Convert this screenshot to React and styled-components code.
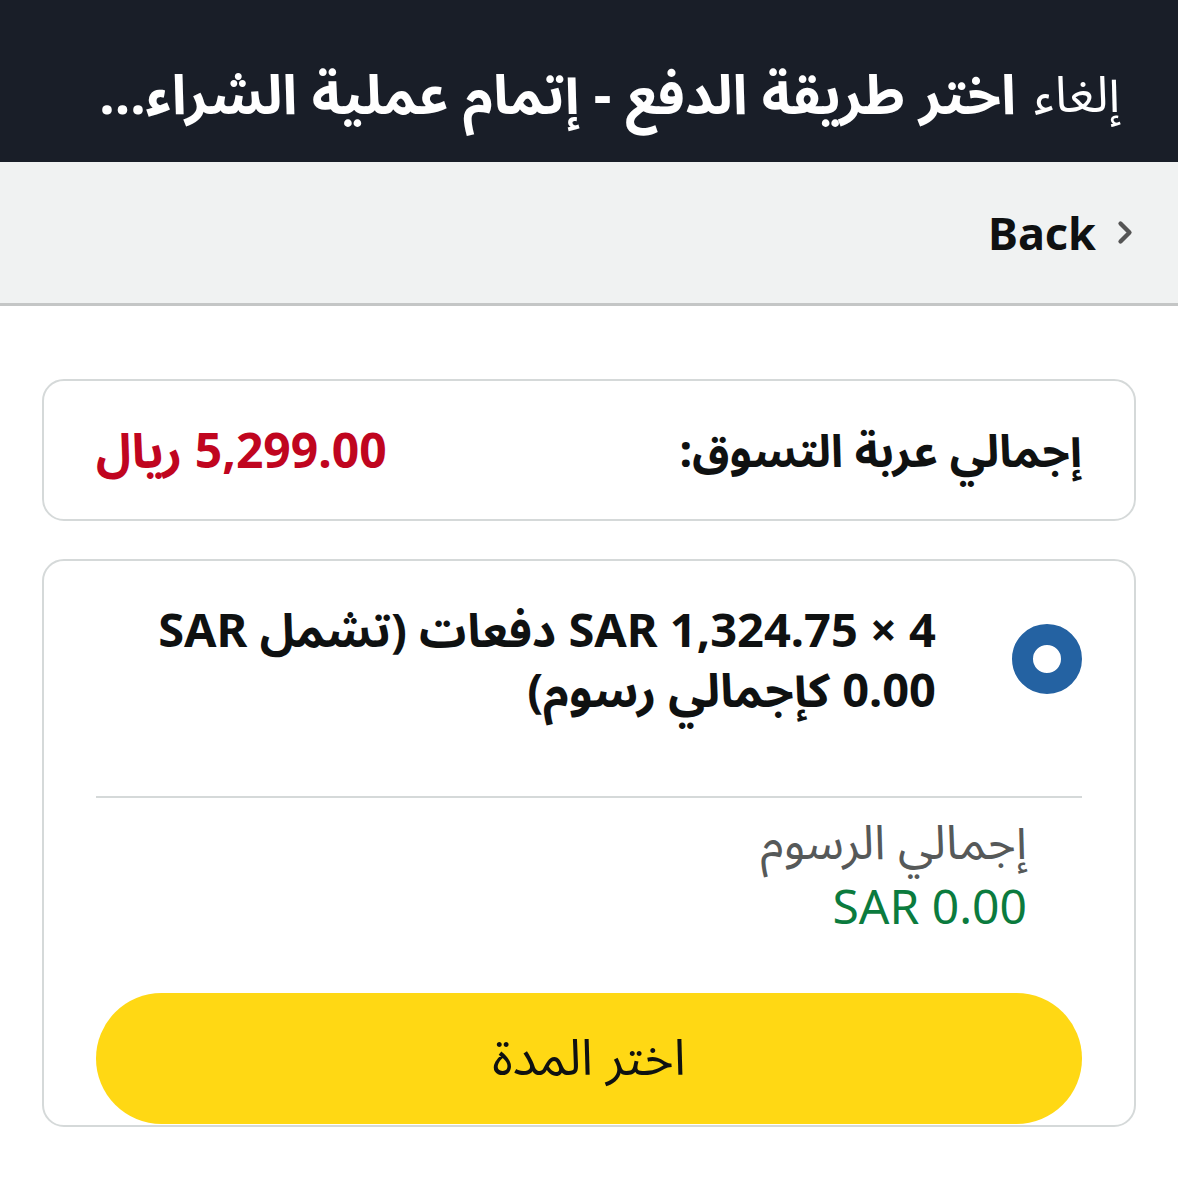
import React, { useState } from 'react';
import styled, { createGlobalStyle } from 'styled-components';

const GlobalStyle = createGlobalStyle`
    html, body {
        margin: 0;
        padding: 0;
        background: #ffffff;
    }
    body {
        font-family: "Noto Sans", "Noto Sans Arabic", "DejaVu Sans", sans-serif;
        color: #0f1111;
    }
`;

const App = () => {
    const [selected, setSelected] = useState(true);

    return (
        <>
            <GlobalStyle />
            <Page dir="rtl">
                <Header>
                    <Cancel>إلغاء</Cancel>
                    <Title>اختر طريقة الدفع - إتمام عملية الشراء...</Title>
                </Header>

                <BackBar>
                    <Chevron viewBox="0 0 16 24" aria-hidden="true">
                        <path d="M4 4 L12 12 L4 20" fill="none" stroke="#555" strokeWidth="3.8" strokeLinecap="round" strokeLinejoin="round" />
                    </Chevron>
                    <BackLabel>Back</BackLabel>
                </BackBar>

                <Content>
                    <TotalCard>
                        <TotalLabel>إجمالي عربة التسوق:</TotalLabel>
                        <Price>5,299.00 ريال</Price>
                    </TotalCard>

                    <OptionCard>
                        <OptionRow onClick={() => setSelected(!selected)}>
                            <Radio className={selected ? 'active' : ''} />
                            <OptionText>4 × SAR 1,324.75 دفعات (تشمل SAR 0.00 كإجمالي رسوم)</OptionText>
                        </OptionRow>
                        <Divider />
                        <Fees>
                            <FeeLabel>إجمالي الرسوم</FeeLabel>
                            <FeeValue>SAR 0.00</FeeValue>
                        </Fees>
                        <SelectButton>اختر المدة</SelectButton>
                    </OptionCard>
                </Content>
            </Page>
        </>
    );
};

const Page = styled.div`
    width: 100%;
    min-height: 1185px;
    background: #ffffff;
`;

const Header = styled.header`
    height: 162px;
    box-sizing: border-box;
    background: #191e28;
    color: #ffffff;
    display: flex;
    align-items: center;
    gap: 18px;
    padding: 30px 58px 0 60px;
`;

const Cancel = styled.span`
    flex: none;
    font-size: 50px;
    font-weight: 400;
`;

const Title = styled.span`
    flex: 1;
    min-width: 0;
    font-size: 55px;
    font-weight: 700;
    white-space: nowrap;
    overflow: hidden;
    text-overflow: ellipsis;
`;

const BackBar = styled.div`
    height: 141px;
    background: #f0f2f2;
    border-bottom: 3px solid #c4c6c6;
    display: flex;
    align-items: center;
    gap: 20px;
    padding: 0 44px;
`;

const Chevron = styled.svg`
    width: 18px;
    height: 27px;
    flex: none;
`;

const BackLabel = styled.span`
    font-size: 45px;
    font-weight: 700;
    color: #0f1111;
`;

const Content = styled.main`
    display: flex;
    flex-direction: column;
    gap: 38px;
    padding: 73px 42px 0;
`;

const Card = styled.section`
    border: 2px solid #d5d9d9;
    border-radius: 22px;
    background: #ffffff;
`;

const TotalCard = styled(Card)`
    display: flex;
    align-items: center;
    justify-content: space-between;
    padding: 39px 52px;
    line-height: 60px;
`;

const TotalLabel = styled.span`
    font-size: 45px;
    font-weight: 700;
`;

const Price = styled.span`
    font-size: 48px;
    font-weight: 700;
    color: #c0051f;
`;

const OptionCard = styled(Card)`
    display: flex;
    flex-direction: column;
    padding: 38px 52px 1px;
    overflow: hidden;
`;

const OptionRow = styled.div`
    display: flex;
    align-items: center;
    gap: 76px;
    cursor: pointer;
`;

const Radio = styled.span`
    flex: none;
    width: 70px;
    height: 70px;
    box-sizing: border-box;
    border-radius: 50%;
    border: 3px solid #8d9096;
    background: #ffffff;

    &.active {
        border: 21.5px solid #2462a2;
    }
`;

const OptionText = styled.p`
    margin: 0;
    max-width: 810px;
    font-size: 47px;
    font-weight: 700;
    line-height: 60px;
`;

const Divider = styled.hr`
    width: 100%;
    margin: 77px 0 0;
    border: none;
    border-top: 2px solid #d5d9d9;
`;

const Fees = styled.div`
    display: flex;
    flex-direction: column;
    padding: 10px 55px 0 0;
    line-height: 65px;
`;

const FeeLabel = styled.span`
    font-size: 48px;
    color: #565959;
`;

const FeeValue = styled.span`
    font-size: 48px;
    color: #0b7b3e;
`;

const SelectButton = styled.button`
    margin-top: 55px;
    height: 131px;
    border: none;
    border-radius: 66px;
    background: #ffd814;
    color: #0f1111;
    font-family: inherit;
    font-size: 50px;
    font-weight: 400;
    cursor: pointer;
`;

export default App;
